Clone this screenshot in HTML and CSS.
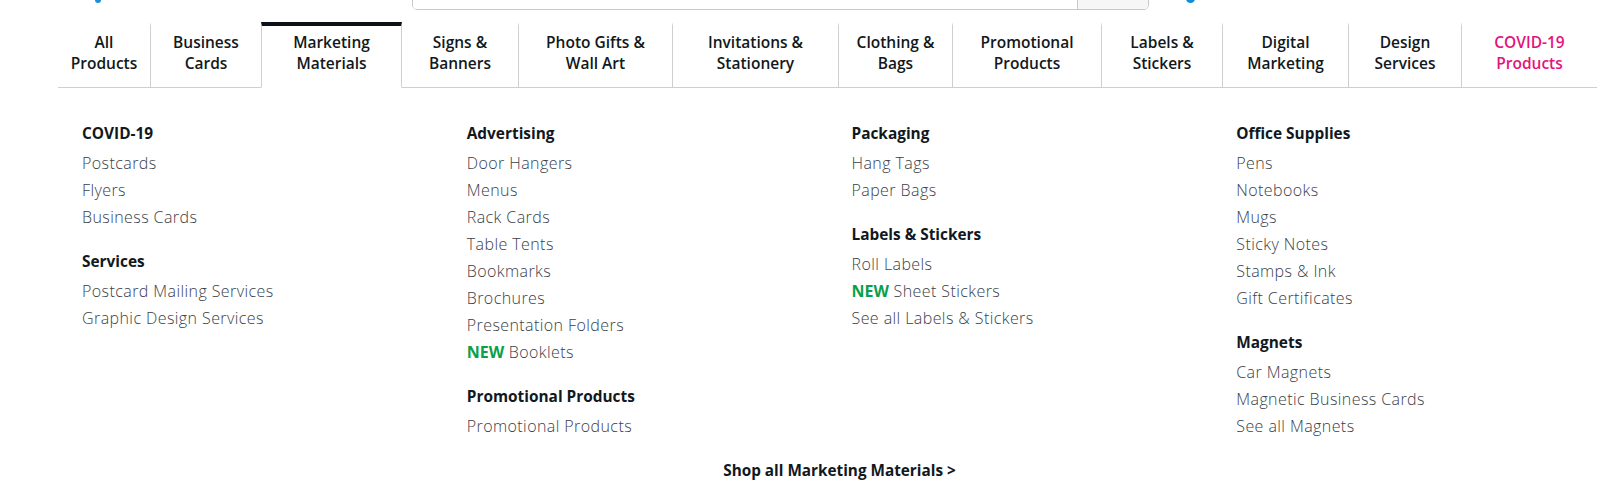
FILE: index.html
```html
<!DOCTYPE html>
<html lang="en">
<head>
<meta charset="utf-8">
<title>Marketing Materials menu</title>
<link rel="stylesheet" href="styles.css">
</head>
<body>
<header class="topbar">
  <span class="logo-tip"></span>
  <div class="search">
    <div class="search-input"></div>
    <div class="search-btn"></div>
  </div>
  <span class="account-dot"></span>
</header>

<nav class="tabs">
  <a class="tab tab-first">All<br>Products</a>
  <a class="tab">Business<br>Cards</a>
  <a class="tab tab-active">Marketing<br>Materials</a>
  <a class="tab">Signs &amp;<br>Banners</a>
  <a class="tab">Photo Gifts &amp;<br>Wall Art</a>
  <a class="tab">Invitations &amp;<br>Stationery</a>
  <a class="tab">Clothing &amp;<br>Bags</a>
  <a class="tab">Promotional<br>Products</a>
  <a class="tab">Labels &amp;<br>Stickers</a>
  <a class="tab">Digital<br>Marketing</a>
  <a class="tab">Design<br>Services</a>
  <a class="tab tab-covid">COVID-19<br>Products</a>
</nav>

<section class="menu">
  <div class="columns">
    <div class="col">
      <div class="group">
        <h3>COVID-19</h3>
        <ul>
          <li>Postcards</li>
          <li>Flyers</li>
          <li>Business Cards</li>
        </ul>
      </div>
      <div class="group">
        <h3>Services</h3>
        <ul>
          <li>Postcard Mailing Services</li>
          <li>Graphic Design Services</li>
        </ul>
      </div>
    </div>
    <div class="col">
      <div class="group">
        <h3>Advertising</h3>
        <ul>
          <li>Door Hangers</li>
          <li>Menus</li>
          <li>Rack Cards</li>
          <li>Table Tents</li>
          <li>Bookmarks</li>
          <li>Brochures</li>
          <li>Presentation Folders</li>
          <li><span class="new">NEW</span> Booklets</li>
        </ul>
      </div>
      <div class="group">
        <h3>Promotional Products</h3>
        <ul>
          <li>Promotional Products</li>
        </ul>
      </div>
    </div>
    <div class="col">
      <div class="group">
        <h3>Packaging</h3>
        <ul>
          <li>Hang Tags</li>
          <li>Paper Bags</li>
        </ul>
      </div>
      <div class="group">
        <h3>Labels &amp; Stickers</h3>
        <ul>
          <li>Roll Labels</li>
          <li><span class="new">NEW</span> Sheet Stickers</li>
          <li>See all Labels &amp; Stickers</li>
        </ul>
      </div>
    </div>
    <div class="col">
      <div class="group">
        <h3>Office Supplies</h3>
        <ul>
          <li>Pens</li>
          <li>Notebooks</li>
          <li>Mugs</li>
          <li>Sticky Notes</li>
          <li>Stamps &amp; Ink</li>
          <li>Gift Certificates</li>
        </ul>
      </div>
      <div class="group">
        <h3>Magnets</h3>
        <ul>
          <li>Car Magnets</li>
          <li>Magnetic Business Cards</li>
          <li>See all Magnets</li>
        </ul>
      </div>
    </div>
  </div>
  <div class="shop-all">Shop all Marketing Materials &gt;</div>
</section>
</body>
</html>
```

FILE: styles.css
```css
* { box-sizing: border-box; }

html, body {
  margin: 0;
  padding: 0;
  background: #ffffff;
}

body {
  font-family: "Open Sans", "Liberation Sans", Arial, sans-serif;
  color: #111820;
  width: 1605px;
  height: 496px;
  overflow: hidden;
}

/* ---------- cropped header strip ---------- */
.topbar {
  display: flex;
  align-items: flex-end;
  height: 10px;
  overflow: hidden;
}

.logo-tip {
  width: 6px;
  height: 3px;
  margin-left: 95px;
  margin-bottom: 7px;
  background: #1a8fd8;
  border-radius: 0 0 3px 3px;
}

.search {
  display: flex;
  margin-left: 311px;
  width: 737px;
  height: 40px;
  flex-shrink: 0;
  border: 1px solid #c9c9c9;
  border-radius: 0 0 5px 5px;
  overflow: hidden;
}

.search-input {
  flex: 1;
  background: #fff;
}

.search-btn {
  width: 71px;
  border-left: 1px solid #c9c9c9;
  background: #f6f6f6;
}

.account-dot {
  width: 9px;
  height: 9px;
  margin-left: 37px;
  margin-bottom: 7px;
  border-radius: 50%;
  background: #0d8fd6;
}

/* ---------- tabs ---------- */
.tabs {
  display: grid;
  grid-template-columns: 92px 111px 141px 116px 154px 166px 114px 149px 121px 126px 113px 136px;
  margin: 12px 0 0 58px;
  width: 1539px;
}

.tab {
  display: flex;
  align-items: flex-start;
  justify-content: center;
  height: 66px;
  padding-top: 6px;
  text-align: center;
  font-size: 15.5px;
  line-height: 20.5px;
  font-weight: 600;
  color: #111820;
  border-left: 1px solid #cfcfcf;
  border-bottom: 1px solid #cfcfcf;
  border-top: 4px solid transparent;
  text-decoration: none;
}

.tab-first { border-left: none; }

.tab-active {
  border-top-color: #0b1118;
  border-right: 1px solid #cfcfcf;
  border-bottom-color: transparent;
}

.tab-active + .tab { border-left: none; }

.tab-covid { color: #e5127d; }

/* ---------- dropdown ---------- */
.menu {
  margin-left: 58px;
  width: 1539px;
  padding-top: 32px;
}

.columns {
  display: grid;
  grid-template-columns: repeat(4, 1fr);
}

.col {
  padding-left: 24px;
  display: flex;
  flex-direction: column;
  gap: 17px;
}

.group h3 {
  margin: 0 0 3px;
  font-size: 15.4px;
  line-height: 27px;
  font-weight: 700;
  color: #111820;
}

.group ul {
  list-style: none;
  margin: 0;
  padding: 0;
}

.group li {
  font-size: 16px;
  line-height: 27px;
  font-weight: 300;
  letter-spacing: 0.42px;
  color: #3a4048;
}

.new {
  color: #0aa04a;
  font-weight: 700;
  letter-spacing: 0;
}

.shop-all {
  margin-top: 17px;
  padding-left: 24px;
  text-align: center;
  font-size: 15.3px;
  line-height: 27px;
  font-weight: 700;
  color: #111820;
}
```
